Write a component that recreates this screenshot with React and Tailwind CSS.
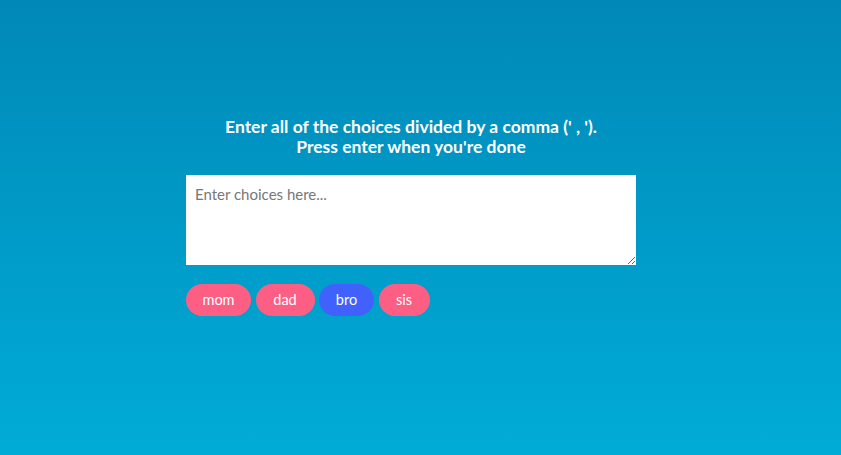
import { useState } from 'react';

const choices = [
  { label: 'mom', active: false, width: 'w-[65px]' },
  { label: 'dad', active: false, width: 'w-[59px]' },
  { label: 'bro', active: true, width: 'w-[55px]' },
  { label: 'sis', active: false, width: 'w-[51px]' },
];

export default function App() {
  const [text, setText] = useState('');

  return (
    <div
      className="min-h-[455px] w-full bg-gradient-to-b from-[#0089b8] to-[#00acd7] pt-[117px]"
      style={{ fontFamily: 'Lato, "Noto Sans", sans-serif' }}
    >
      <div className="ml-[186px] w-[450px]">
        <h3 className="text-center text-[17.5px] font-bold leading-[20px] text-white">
          Enter all of the choices divided by a comma (' , ').
          <br />
          Press enter when you're done
        </h3>

        <textarea
          className="mt-[18px] block h-[90px] w-[450px] resize bg-white px-[9px] py-[8px] text-[15px] text-gray-800 placeholder:text-[#777] outline-none"
          placeholder="Enter choices here..."
          value={text}
          onChange={(e) => setText(e.target.value)}
        />

        <div className="mt-[19px] flex gap-[4.5px]">
          {choices.map((c) => (
            <span
              key={c.label}
              className={`flex h-[32px] items-center justify-center rounded-[16px] text-[14.5px] text-white ${
                c.active ? 'bg-[#4161fd]' : 'bg-[#fd5e84]'
              } ${c.width}`}
            >
              {c.label}
            </span>
          ))}
        </div>
      </div>
    </div>
  );
}
